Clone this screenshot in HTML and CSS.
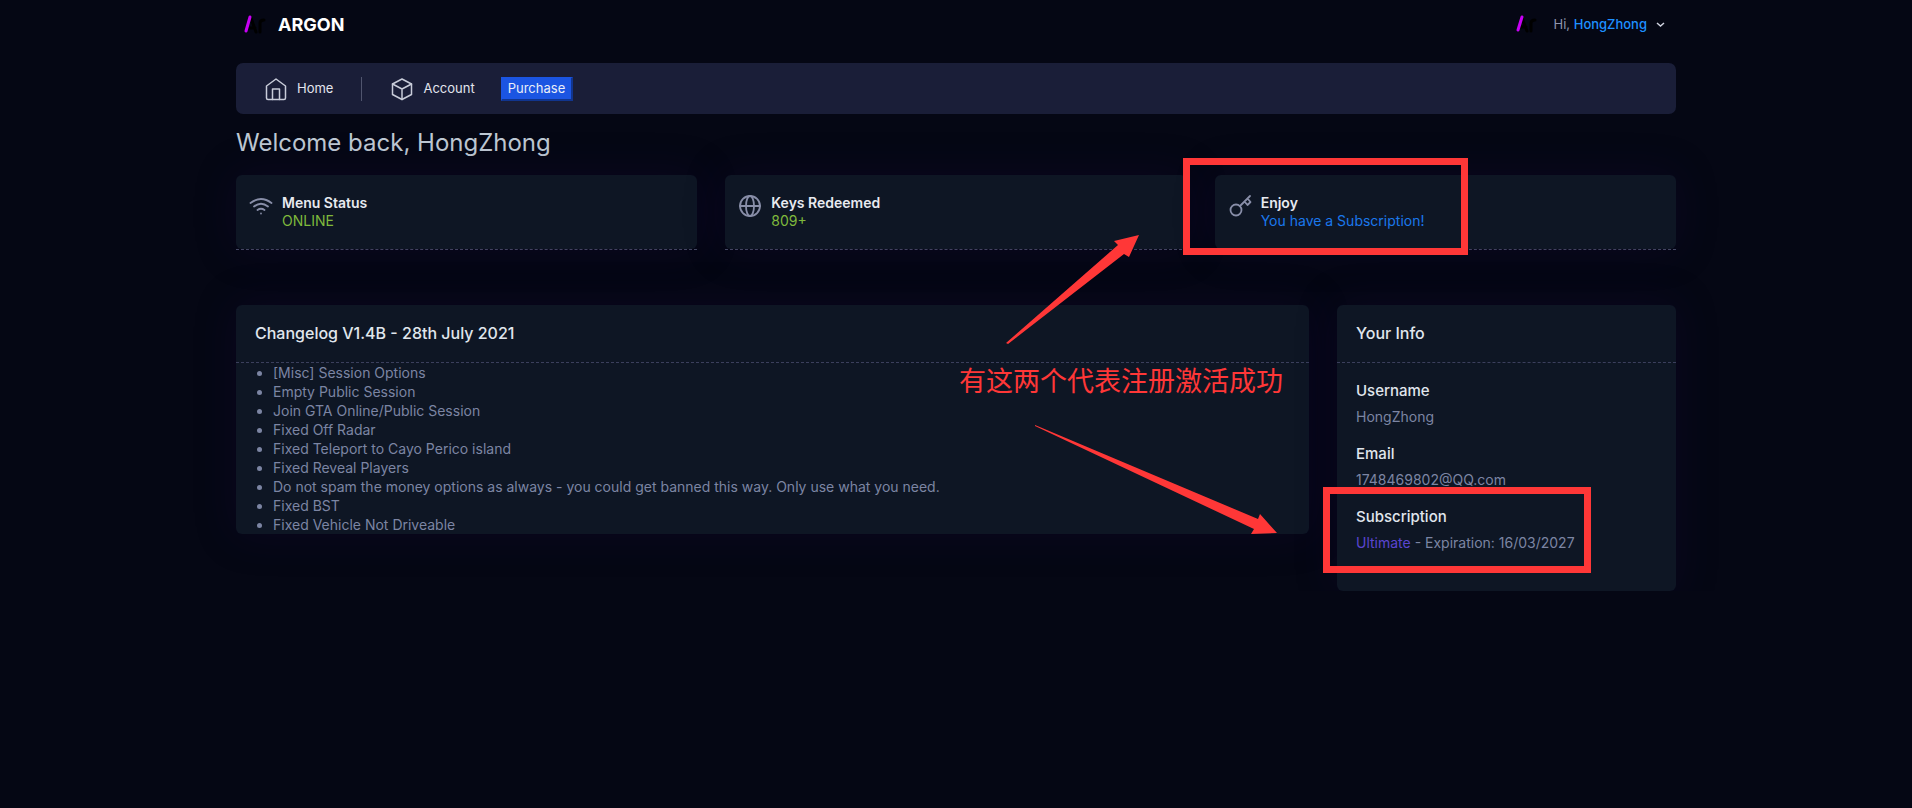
FILE: index.html
```
<!DOCTYPE html>
<html lang="en">
<head>
    <meta charset="UTF-8">
    <meta name="viewport" content="width=device-width, initial-scale=1.0">
    <title>Argon - Dashboard</title>
    <link rel="stylesheet" href="styles.css">
</head>
<body>
    <div class="container">

        <header class="topbar">
            <a class="brand" href="#">
                <svg class="logo" width="26" height="26" viewBox="0 0 26 26">
                    <path class="logo-dark" d="M9 7l5 14M8 17h5M18 21v-9q0-3 4-3"/>
                    <path class="logo-slash" d="M8 6L4 20"/>
                </svg>
                <span>ARGON</span>
            </a>
            <button class="user-menu" type="button">
                <svg class="logo" width="26" height="26" viewBox="0 0 26 26">
                    <path class="logo-dark" d="M9 7l5 13M8 16h5M18 20v-8q0-3 4-3"/>
                    <path class="logo-slash" d="M9 6L5 19"/>
                </svg>
                <span class="greeting">Hi, <b>HongZhong</b></span>
                <svg class="chevron" width="9" height="9" viewBox="0 0 9 9">
                    <path d="M1 3l3.500 3L8 3"/>
                </svg>
            </button>
        </header>

        <nav class="navbar">
            <a class="nav-link" href="#">
                <svg class="icon" width="24" height="24" viewBox="0 0 24 24">
                    <path d="M2.500 9L12 2l9.500 7v12q0 1.500-1.500 1.500H4q-1.500 0-1.500-1.500z"/>
                    <path d="M8.500 22.500V12h7v10.500"/>
                </svg>
                <span>Home</span>
            </a>
            <span class="divider"></span>
            <a class="nav-link" href="#">
                <svg class="icon" width="24" height="24" viewBox="0 0 24 24">
                    <path d="M12 2l9.500 5v10.500L12 22.500 2.500 17.500V7z"/>
                    <path d="M2.500 7l9.500 5 9.500-5M12 12v10.500"/>
                </svg>
                <span>Account</span>
            </a>
            <button class="purchase" type="button">Purchase</button>
        </nav>

        <h1>Welcome back, HongZhong</h1>

        <!-- Status cards -->
        <div class="stats">
            <div class="stat">
                <div class="card stat-body">
                    <svg class="icon" width="24" height="24" viewBox="0 0 24 24">
                        <path d="M1.500 9Q12 1 22.500 9M5 12.500q7-5.500 14 0M8.500 16q3.500-2.500 7 0M12 19.500v.1"/>
                    </svg>
                    <div>
                        <h2>Menu Status</h2>
                        <p class="green">ONLINE</p>
                    </div>
                </div>
            </div>
            <div class="stat">
                <div class="card stat-body">
                    <svg class="icon" width="24" height="24" viewBox="0 0 24 24">
                        <circle cx="12" cy="12" r="10"/>
                        <ellipse cx="12" cy="12" rx="4" ry="10"/>
                        <path d="M2 12h20"/>
                    </svg>
                    <div>
                        <h2>Keys Redeemed</h2>
                        <p class="green">809+</p>
                    </div>
                </div>
            </div>
            <div class="stat">
                <div class="card stat-body">
                    <svg class="icon" width="24" height="24" viewBox="0 0 24 24">
                        <circle cx="8" cy="16" r="5.500"/>
                        <path d="M12 12l10-10M16.500 7.500l3 3.500L22.500 8l-3-3.500"/>
                    </svg>
                    <div>
                        <h2>Enjoy</h2>
                        <p class="blue">You have a Subscription!</p>
                    </div>
                </div>
            </div>
        </div>

        <div class="panels">
            <section class="card changelog">
                <h3>Changelog V1.4B - 28th July 2021</h3>
                <ul>
                    <li>[Misc] Session Options</li>
                    <li>Empty Public Session</li>
                    <li>Join GTA Online/Public Session</li>
                    <li>Fixed Off Radar</li>
                    <li>Fixed Teleport to Cayo Perico island</li>
                    <li>Fixed Reveal Players</li>
                    <li>Do not spam the money options as always - you could get banned this way. Only use what you need.</li>
                    <li>Fixed BST</li>
                    <li>Fixed Vehicle Not Driveable</li>
                </ul>
            </section>
            <section class="card info">
                <h3>Your Info</h3>
                <dl>
                    <dt>Username</dt>
                    <dd>HongZhong</dd>
                    <dt>Email</dt>
                    <dd>1748469802@QQ.com</dd>
                    <dt>Subscription</dt>
                    <dd><span class="purple">Ultimate</span> - Expiration: 16/03/2027</dd>
                </dl>
            </section>
        </div>

        <!-- Red markup drawn over the page -->
        <svg class="markup" width="1440" height="600" viewBox="0 0 1440 600">
            <rect x="950.500" y="161.500" width="278" height="90"/>
            <rect x="1090.500" y="490.500" width="261" height="79"/>
            <path d="M770 343L882 245 878 241 903 235 893 257 888 254 772 344z"/>
            <path d="M799 425L1022 519 1024 514 1041 533 1015 534 1018 529 799 426z"/>
            <text x="723" y="391">有这两个代表注册激活成功</text>
        </svg>
    </div>
</body>
</html>
```
FILE: styles.css
```
* {
    box-sizing: border-box;
}
body {
    margin: 0;
    background: #050714;
    color: #7c85a3;
    font-family: Inter, "Noto Sans CJK SC", sans-serif;
    font-size: 14px;
    line-height: 19px;
}
h1, h2, h3, p, ul, dl, dd {
    margin: 0;
}
a {
    color: inherit;
    text-decoration: none;
}
button {
    font: inherit;
    cursor: pointer;
}
.container {
    position: relative;
    max-width: 1440px;
    margin: 0 auto;
}
.topbar {
    display: flex;
    justify-content: space-between;
    align-items: center;
    height: 48px;
    padding: 0 11px 0 6px;
}
.brand {
    display: flex;
    align-items: center;
    gap: 10px;
    color: #fff;
    font-size: 18px;
    font-weight: 700;
}
.logo path {
    fill: none;
    stroke-width: 3;
    stroke-linecap: round;
}
.logo .logo-dark {
    stroke: #000;
}
.logo .logo-slash {
    stroke: #c800f5;
}
.user-menu {
    display: flex;
    align-items: center;
    padding: 0;
    border: 0;
    background: none;
    color: #8f95ad;
    font-size: 13px;
}
.user-menu b {
    color: #1e90ff;
    font-weight: 500;
}
.greeting {
    margin: 0 9px 0 14px;
}
.chevron path {
    fill: none;
    stroke: #d0d3e0;
    stroke-width: 1.5;
}
.navbar {
    display: flex;
    align-items: center;
    height: 51px;
    margin-top: 15px;
    padding: 0 28px;
    border-radius: 7px;
    background: #1a1e38;
    color: #e2e5ee;
    font-size: 13px;
}
.icon {
    flex: none;
    fill: none;
    stroke: currentColor;
    stroke-width: 1.8;
    stroke-linejoin: round;
    stroke-linecap: round;
}
.nav-link {
    display: flex;
    align-items: center;
    gap: 9px;
}
.nav-link .icon {
    color: #c8ccd9;
    stroke-width: 1.5;
}
.divider {
    width: 1px;
    height: 24px;
    margin: 0 28px;
    background: #50556e;
}
.purchase {
    height: 24px;
    margin-left: 26px;
    padding: 0 6px;
    border: 2px outset #1b55e2;
    border-width: 1px 2px 2px 1px;
    background: #1b55e2;
    color: #e9edf8;
    line-height: 20px;
}
h1 {
    padding: 13px 0 16px;
    color: #bfc9d4;
    font-size: 24px;
    font-weight: 400;
    line-height: 32px;
}
.card {
    border-radius: 6px;
    background: #0e1624;
    box-shadow: 0 0 40px rgba(24, 8, 60, 0.3);
}
.stats {
    display: grid;
    grid-template-columns: repeat(3, 1fr);
    gap: 28px;
}
.stat {
    border-bottom: 1px dashed #4a4e68;
}
.stat-body {
    display: flex;
    gap: 9px;
    min-height: 74px;
    padding: 19px 13px;
}
.stat .icon {
    color: #888ea8;
}
h2 {
    color: #e8eaf0;
    font-size: 14px;
    font-weight: 600;
    line-height: 18px;
}
.green {
    color: #7fb93c;
    line-height: 17px;
}
.blue {
    color: #1b78ec;
    line-height: 17px;
}
.purple {
    color: #5b45d0;
}
.panels {
    display: grid;
    grid-template-columns: repeat(12, 1fr);
    gap: 28px;
    align-items: start;
    margin-top: 55px;
}
.changelog {
    grid-column: span 9;
}
.info {
    grid-column: span 3;
}
h3 {
    padding: 19px;
    border-bottom: 1px dashed #3b3f5c;
    color: #e0e6ed;
    font-size: 16px;
    font-weight: 500;
    line-height: 19px;
}
ul {
    padding: 0 0 0 37px;
}
dl {
    padding: 18px 19px 21px;
}
dt {
    color: #e0e6ed;
    font-size: 15px;
    font-weight: 500;
    line-height: 20px;
}
dd {
    margin: 6px 0 18px;
}
.markup {
    position: absolute;
    top: 0;
    left: 0;
    pointer-events: none;
}
.markup rect {
    fill: none;
    stroke: #ff3737;
    stroke-width: 7;
}
.markup path,
.markup text {
    fill: #ff3737;
}
.markup text {
    font-family: "Noto Sans CJK SC", sans-serif;
    font-size: 27px;
}
```
